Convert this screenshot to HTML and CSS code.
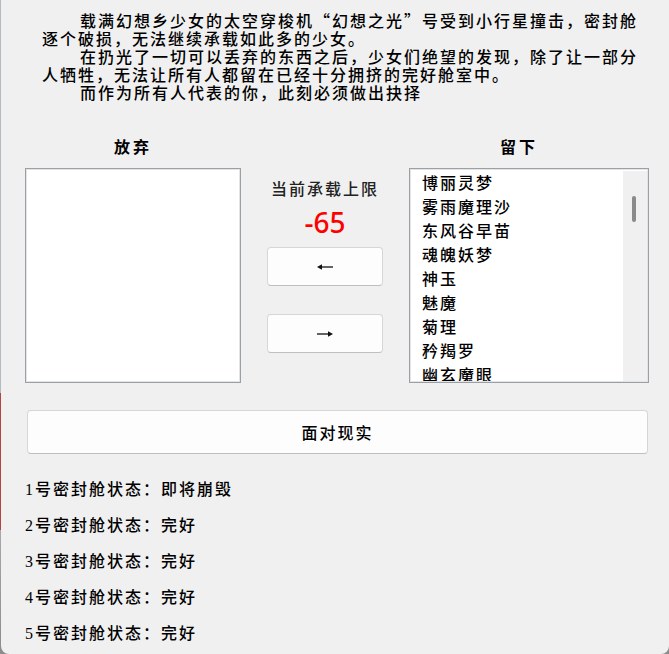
FILE: index.html
```html
<!DOCTYPE html>
<html lang="zh-CN">
<head>
<meta charset="utf-8">
<title>幻想之光</title>
<link rel="stylesheet" href="styles.css">
</head>
<body>
<div class="window">
  <div class="intro">
    <p>载满幻想乡少女的太空穿梭机“幻想之光”号受到小行星撞击，密封舱<br>逐个破损，无法继续承载如此多的少女。</p>
    <p>在扔光了一切可以丢弃的东西之后，少女们绝望的发现，除了让一部分<br>人牺牲，无法让所有人都留在已经十分拥挤的完好舱室中。</p>
    <p>而作为所有人代表的你，此刻必须做出抉择</p>
  </div>

  <div class="panel">
    <div class="col-head">放弃</div>
    <div></div>
    <div class="col-head right-head">留下</div>

    <div class="list"></div>

    <div class="middle">
      <div class="limit-label">当前承载上限</div>
      <div class="limit-value">-65</div>
      <button class="arrow-btn">
        <svg width="18" height="8" viewBox="0 0 18 8"><path d="M1 4 L6 1.3 L6 6.7 Z" fill="#111"/><line x1="5" y1="4" x2="17" y2="4" stroke="#111" stroke-width="1.3"/></svg>
      </button>
      <button class="arrow-btn second">
        <svg width="18" height="8" viewBox="0 0 18 8"><path d="M17 4 L12 1.3 L12 6.7 Z" fill="#111"/><line x1="1" y1="4" x2="13" y2="4" stroke="#111" stroke-width="1.3"/></svg>
      </button>
    </div>

    <div class="list list-right">
      <ul class="items">
        <li>博丽灵梦</li>
        <li>雾雨魔理沙</li>
        <li>东风谷早苗</li>
        <li>魂魄妖梦</li>
        <li>神玉</li>
        <li>魅魔</li>
        <li>菊理</li>
        <li>矜羯罗</li>
        <li>幽玄魔眼</li>
      </ul>
      <div class="scrollbar"><div class="thumb"></div></div>
    </div>
  </div>

  <button class="face">面对现实</button>

  <ul class="status">
    <li>1号密封舱状态：即将崩毁</li>
    <li>2号密封舱状态：完好</li>
    <li>3号密封舱状态：完好</li>
    <li>4号密封舱状态：完好</li>
    <li>5号密封舱状态：完好</li>
  </ul>
</div>
</body>
</html>
```
FILE: styles.css
```css
* {
  box-sizing: border-box;
}

html {
  height: 100%;
  background: linear-gradient(to bottom, #b4b9c2 0, #b4b9c2 393px, #b5443f 393px, #b5443f 530px, #a8a8a8 530px, #8c8c8c 100%);
}

body {
  margin: 0;
  font-family: "Noto Sans CJK SC", sans-serif;
  font-weight: 500;
  color: #000;
}

.window {
  margin-left: 1px;
  height: 654px;
  background: #f0f0f0;
  border-radius: 0 0 8px 8px;
  display: flex;
  flex-direction: column;
  overflow: hidden;
}

.intro {
  margin: 11px 0 0 41px;
  font-size: 16px;
  line-height: 18px;
  letter-spacing: 2px;
  white-space: nowrap;
}

.intro p {
  margin: 0;
  text-indent: 38px;
}

.panel {
  display: grid;
  grid-template-columns: 216px 116px 240px;
  grid-template-rows: 20px 215px;
  column-gap: 26px;
  row-gap: 12px;
  margin: 35px 0 0 24px;
}

.col-head {
  font-size: 16px;
  font-weight: 700;
  line-height: 20px;
  text-align: center;
  letter-spacing: 3px;
}

.right-head {
  padding-right: 20px;
}

.list {
  background: #fff;
  border: 1px solid #9ba0a6;
  box-shadow: inset 0 0 0 1px #e4e4e4;
  height: 215px;
}

.list-right {
  display: flex;
  padding: 1px 1px 1px 0;
  overflow: hidden;
}

.items {
  list-style: none;
  margin: 0;
  padding: 0 0 0 12px;
  flex: 1;
  font-size: 16px;
  letter-spacing: 2px;
  overflow: hidden;
}

.items li {
  height: 24px;
  line-height: 24px;
  white-space: nowrap;
}

.scrollbar {
  width: 24px;
  margin-top: 1px;
  background: #f0f0f0;
}

.thumb {
  width: 4px;
  height: 26px;
  margin: 25px 0 0 9px;
  background: #8a8a8a;
  border-radius: 2px;
}

.middle {
  display: flex;
  flex-direction: column;
  align-items: center;
}

.limit-label {
  margin-top: 11px;
  font-size: 16px;
  line-height: 18px;
  letter-spacing: 2px;
  color: #222;
}

.limit-value {
  margin-top: 10px;
  line-height: 30px;
  font-size: 28px;
  font-family: "Noto Sans", sans-serif;
  font-weight: 500;
  color: #ff0000;
}

.arrow-btn,
.face {
  font: inherit;
  background: #fdfdfd;
  border: 1px solid #d6d6d6;
  border-bottom-color: #bfbfbf;
  border-radius: 4px;
  padding: 0;
  color: #000;
}

.arrow-btn {
  width: 116px;
  height: 39px;
  margin-top: 10px;
  display: flex;
  align-items: center;
  justify-content: center;
}

.arrow-btn.second {
  margin-top: 28px;
}

.face {
  width: 621px;
  height: 44px;
  margin: 27px 0 0 26px;
  font-size: 16px;
  letter-spacing: 2px;
}

.status {
  list-style: none;
  margin: 18px 0 0 24px;
  padding: 0;
  font-family: "Liberation Serif", "Noto Sans CJK SC", serif;
  font-size: 16px;
  line-height: 36px;
  letter-spacing: 2px;
}
```
